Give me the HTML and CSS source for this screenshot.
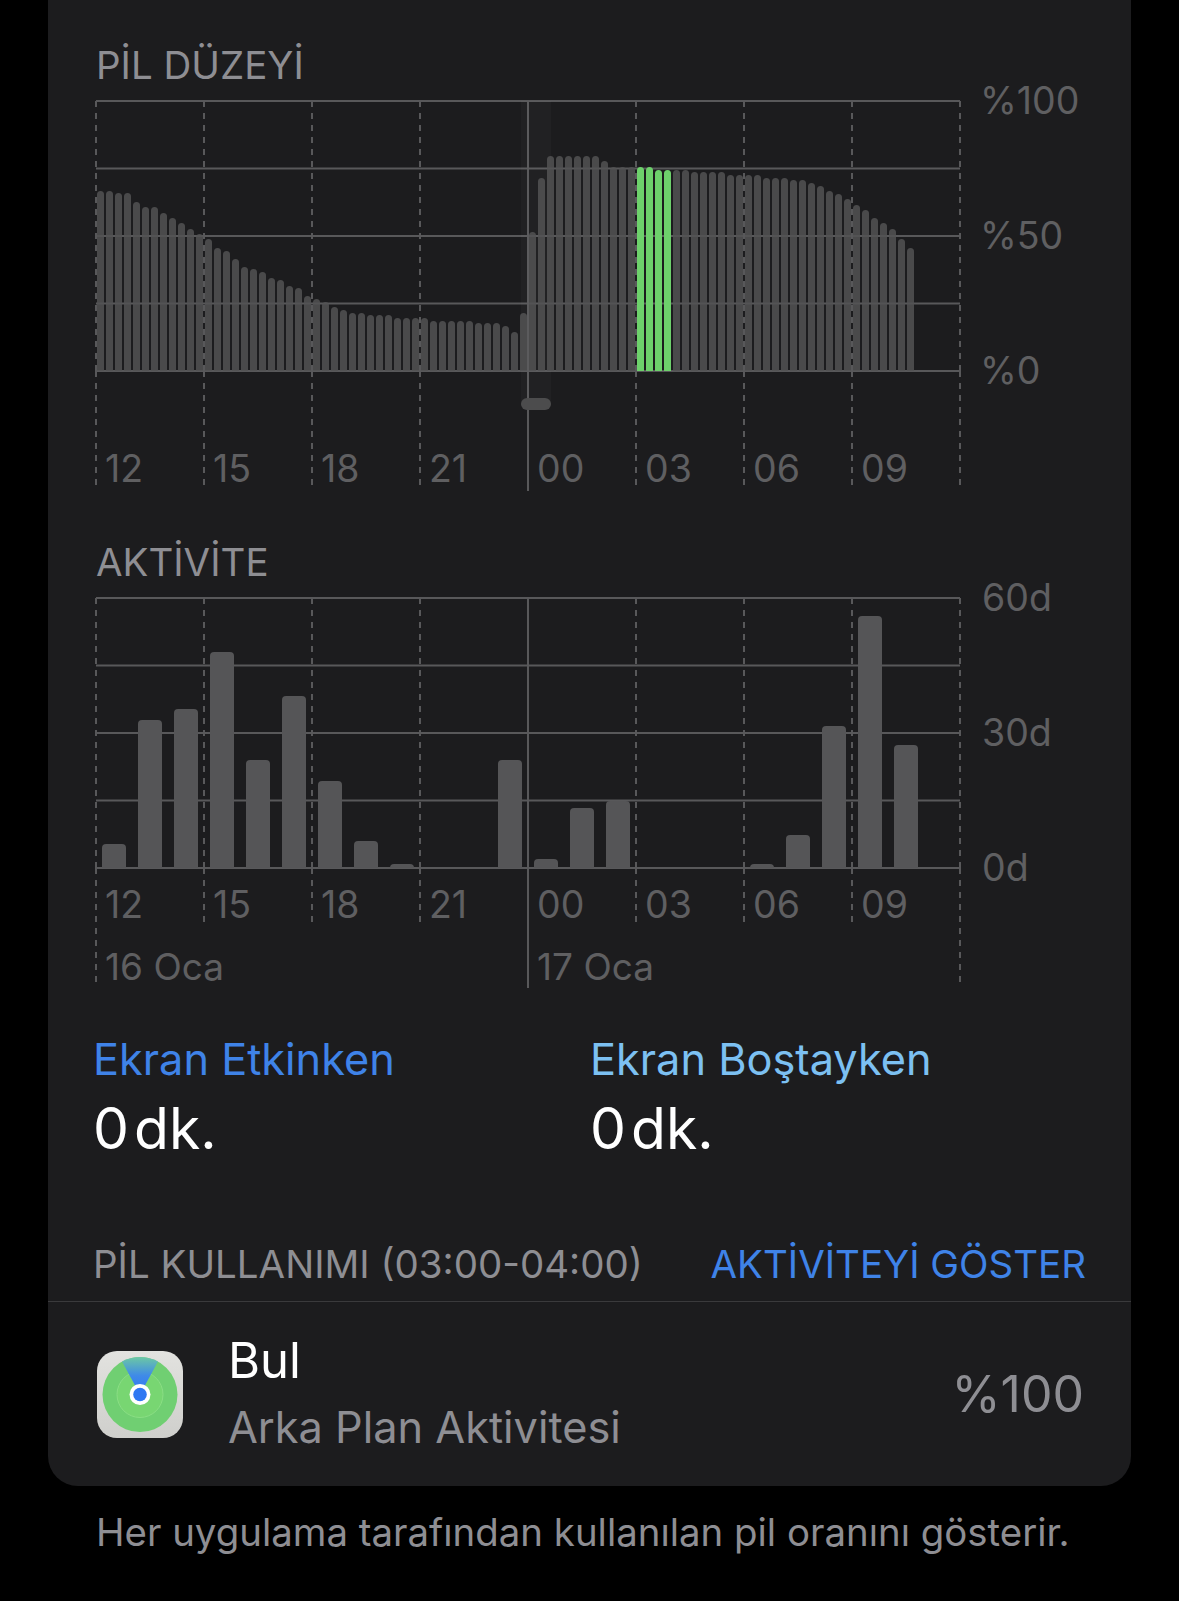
FILE: index.html
```html
<!DOCTYPE html>
<html lang="tr">
<head>
    <meta charset="utf-8">
    <title>Pil</title>
    <link rel="stylesheet" href="styles.css">
</head>
<body>
    <div class="card">
        <div class="charts">
            <h2 class="chart-title">PİL DÜZEYİ</h2>
            <div class="chart-body">
                <div class="plot plot-battery">
                    <svg class="grid" width="866" height="392" viewBox="-1 -1 866 392">
                        <path class="grid-solid" d="M0 0H864M0 67.5H864M0 135H864M0 202.5H864M0 270H864M432 0V390"/>
                        <path class="grid-solid" d="M0 270V276M108 270V276M216 270V276M324 270V276M540 270V276M648 270V276M756 270V276M864 270V276"/>
                        <path class="grid-dash" d="M0 0V270M108 0V270M216 0V270M324 0V270M540 0V270M648 0V270M756 0V270M864 0V270"/>
                        <path class="grid-dash" d="M0 282V384M108 282V384M216 282V384M324 282V384M540 282V384M648 282V384M756 282V384M864 282V384"/>
                    </svg>
                    <div class="slider-band"></div>
                    <div class="slider-handle"></div>
                    <div class="level-bars">
                        <i style="height:180px"></i><i style="height:180px"></i><i style="height:178px"></i><i style="height:178px"></i><i style="height:169px"></i><i style="height:164px"></i><i style="height:164px"></i><i style="height:158px"></i><i style="height:153px"></i><i style="height:148px"></i><i style="height:142px"></i><i style="height:137px"></i>
                        <i style="height:132px"></i><i style="height:123px"></i><i style="height:120px"></i><i style="height:112px"></i><i style="height:104px"></i><i style="height:102px"></i><i style="height:99px"></i><i style="height:93px"></i><i style="height:91px"></i><i style="height:85px"></i><i style="height:83px"></i><i style="height:75px"></i>
                        <i style="height:72px"></i><i style="height:69px"></i><i style="height:64px"></i><i style="height:61px"></i><i style="height:58px"></i><i style="height:58px"></i><i style="height:56px"></i><i style="height:56px"></i><i style="height:56px"></i><i style="height:53px"></i><i style="height:53px"></i><i style="height:53px"></i>
                        <i style="height:53px"></i><i style="height:50px"></i><i style="height:50px"></i><i style="height:50px"></i><i style="height:50px"></i><i style="height:50px"></i><i style="height:48px"></i><i style="height:48px"></i><i style="height:48px"></i><i style="height:45px"></i><i style="height:39px"></i><i style="height:58px"></i>
                        <i style="height:139px"></i><i style="height:193px"></i><i style="height:215px"></i><i style="height:215px"></i><i style="height:215px"></i><i style="height:215px"></i><i style="height:215px"></i><i style="height:215px"></i><i style="height:210px"></i><i style="height:204px"></i><i style="height:204px"></i><i style="height:204px"></i>
                        <i class="on" style="height:204px"></i><i class="on" style="height:204px"></i><i class="on" style="height:201px"></i><i class="on" style="height:201px"></i><i style="height:201px"></i><i style="height:201px"></i><i style="height:199px"></i><i style="height:199px"></i><i style="height:199px"></i><i style="height:199px"></i><i style="height:196px"></i><i style="height:196px"></i>
                        <i style="height:196px"></i><i style="height:196px"></i><i style="height:193px"></i><i style="height:193px"></i><i style="height:193px"></i><i style="height:191px"></i><i style="height:191px"></i><i style="height:188px"></i><i style="height:185px"></i><i style="height:180px"></i><i style="height:177px"></i><i style="height:172px"></i>
                        <i style="height:166px"></i><i style="height:161px"></i><i style="height:153px"></i><i style="height:148px"></i><i style="height:142px"></i><i style="height:132px"></i><i style="height:123px"></i>
                    </div>
                </div>
                <div class="axis axis-percent">
                    <span>%100</span>
                    <span>%50</span>
                    <span>%0</span>
                </div>
                <div class="hours">
                    <span>12</span><span>15</span><span>18</span><span>21</span><span>00</span><span>03</span><span>06</span><span>09</span>
                </div>
            </div>

            <h2 class="chart-title chart-title-second">AKTİVİTE</h2>
            <div class="chart-body">
                <div class="plot plot-activity">
                    <svg class="grid" width="866" height="392" viewBox="-1 -1 866 392">
                        <path class="grid-solid" d="M0 0H864M0 67.5H864M0 135H864M0 202.5H864M0 270H864M432 0V390"/>
                        <path class="grid-solid" d="M0 270V276M108 270V276M216 270V276M324 270V276M540 270V276M648 270V276M756 270V276M864 270V276"/>
                        <path class="grid-dash" d="M0 0V270M108 0V270M216 0V270M324 0V270M540 0V270M648 0V270M756 0V270M864 0V270"/>
                        <path class="grid-dash" d="M0 282V384M864 282V384M108 282V324M216 282V324M324 282V324M540 282V324M648 282V324M756 282V324"/>
                    </svg>
                    <div class="activity-bars">
                        <i style="height:24px"></i><i style="height:148px"></i><i style="height:159px"></i><i style="height:216px"></i><i style="height:108px"></i><i style="height:172px"></i><i style="height:87px"></i><i style="height:27px"></i>
                        <i style="height:4px"></i><i></i><i></i><i style="height:108px"></i><i style="height:9px"></i><i style="height:60px"></i><i style="height:67px"></i><i></i>
                        <i></i><i></i><i style="height:4px"></i><i style="height:33px"></i><i style="height:142px"></i><i style="height:252px"></i><i style="height:123px"></i><i></i>
                    </div>
                </div>
                <div class="axis">
                    <span>60d</span>
                    <span>30d</span>
                    <span>0d</span>
                </div>
                <div class="hours">
                    <span>12</span><span>15</span><span>18</span><span>21</span><span>00</span><span>03</span><span>06</span><span>09</span>
                </div>
                <div class="dates">
                    <span>16 Oca</span>
                    <span>17 Oca</span>
                </div>
            </div>
        </div>

        <div class="legend">
            <div class="legend-item">
                <div class="legend-label label-active">Ekran Etkinken</div>
                <div class="legend-value">0 dk.</div>
            </div>
            <div class="legend-item">
                <div class="legend-label label-idle">Ekran Boştayken</div>
                <div class="legend-value">0 dk.</div>
            </div>
        </div>

        <div class="usage-head">
            <span>PİL KULLANIMI (03:00-04:00)</span>
            <a class="show-activity">AKTİVİTEYİ GÖSTER</a>
        </div>

        <div class="app-row">
            <svg class="app-icon" width="86" height="87" viewBox="0 0 86 87">
                <defs>
                    <linearGradient id="iconBg" x1="0" y1="0" x2="0" y2="1">
                        <stop offset="0" stop-color="#e2e2df"/>
                        <stop offset="1" stop-color="#cfcfcc"/>
                    </linearGradient>
                    <linearGradient id="cone" x1="0" y1="1" x2="0" y2="0">
                        <stop offset="0" stop-color="#2f78f4"/>
                        <stop offset="0.5" stop-color="#3f8ae8"/>
                        <stop offset="1" stop-color="#6cc8a4"/>
                    </linearGradient>
                </defs>
                <rect width="86" height="87" rx="20" fill="url(#iconBg)"/>
                <circle cx="43" cy="43.5" r="37.5" fill="#70cf72"/>
                <circle cx="43" cy="43.5" r="23" fill="#78d672" stroke="#8ade84" stroke-width="1"/>
                <path d="M43 43.5L25 10.6A37.5 37.5 0 0 1 61 10.6Z" fill="url(#cone)"/>
                <circle cx="43" cy="43.5" r="10.5" fill="#fff"/>
                <circle cx="43" cy="43.5" r="6.8" fill="#2f78f2"/>
            </svg>
            <div class="app-text">
                <div class="app-name">Bul</div>
                <div class="app-sub">Arka Plan Aktivitesi</div>
            </div>
            <div class="app-percent">%100</div>
        </div>
    </div>

    <p class="footnote">Her uygulama tarafından kullanılan pil oranını gösterir.</p>
</body>
</html>
```

FILE: styles.css
```css
body {
    margin: 0;
    background-color: #000;
    font-family: Inter, "Liberation Sans", sans-serif;
    color: #8e8e93;
}

.card {
    margin: 0 48px;
    background-color: #1c1c1e;
    border-radius: 0 0 30px 30px;
}

.charts {
    padding: 43px 0 0 48px;
}

.chart-title {
    margin: 0 0 14px;
    font-size: 38.5px;
    font-weight: 400;
    line-height: 44px;
    color: #8e8e93;
}

.chart-title-second {
    margin-top: 51px;
}

.chart-body {
    display: grid;
    grid-template-columns: 864px auto;
    column-gap: 22px;
}

.plot {
    position: relative;
    height: 270px;
}

.plot-battery {
    margin-bottom: 78px;
}

.plot-activity {
    margin-bottom: 17px;
}

.grid {
    position: absolute;
    left: -1px;
    top: -1px;
    overflow: visible;
}

.grid-solid {
    fill: none;
    stroke: #58585a;
    stroke-width: 2;
}

.grid-dash {
    fill: none;
    stroke: #58585a;
    stroke-width: 2;
    stroke-dasharray: 6 6;
}

.slider-band {
    position: absolute;
    left: 425px;
    top: 0;
    width: 30px;
    height: 305px;
    background-color: rgba(255, 255, 255, 0.025);
}

.slider-handle {
    position: absolute;
    left: 425px;
    top: 297px;
    width: 30px;
    height: 12px;
    border-radius: 6px;
    background-color: #4c4c4d;
}

.level-bars {
    position: absolute;
    left: 0;
    right: 0;
    bottom: 0;
    display: flex;
    align-items: flex-end;
}

.level-bars i {
    flex: none;
    width: 7px;
    margin: 0 1px;
    border-radius: 3.5px 3.5px 0 0;
    background-color: rgba(82, 82, 83, 0.85);
}

.level-bars i.on {
    background-color: #6dd16b;
}

.activity-bars {
    position: absolute;
    left: 0;
    right: 0;
    bottom: 0;
    display: flex;
    align-items: flex-end;
}

.activity-bars i {
    flex: none;
    width: 24px;
    margin: 0 6px;
    border-radius: 4px 4px 0 0;
    background-color: #555557;
}

.axis {
    display: flex;
    flex-direction: column;
    justify-content: space-between;
    height: 270px;
    font-size: 37.5px;
    color: #5f5f61;
}

.axis-percent {
    margin-left: -2px;
}

.axis span {
    height: 0;
    line-height: 0;
}

.hours {
    display: grid;
    grid-template-columns: repeat(8, 108px);
    font-size: 37.5px;
    line-height: 40px;
    color: #5f5f61;
}

.hours span {
    padding-left: 9px;
}

.dates {
    grid-column: 1;
    display: grid;
    grid-template-columns: 432px 432px;
    margin-top: 22px;
    font-size: 37px;
    line-height: 40px;
    color: #5f5f61;
}

.dates span {
    padding-left: 9px;
}

.legend {
    display: grid;
    grid-template-columns: 497px auto;
    margin-top: 47px;
    padding-left: 45px;
}

.legend-label {
    font-size: 43.3px;
    line-height: 50px;
}

.label-active {
    color: #3f83e8;
}

.label-idle {
    color: #7cc0f2;
}

.legend-value {
    margin-top: 10px;
    font-size: 57px;
    line-height: 70px;
    color: #fff;
    word-spacing: -11px;
}

.usage-head {
    display: flex;
    justify-content: space-between;
    margin-top: 78px;
    padding: 0 45px 15px;
    border-bottom: 1.5px solid #3a3a3c;
    font-size: 38.5px;
    line-height: 44px;
}

.show-activity {
    color: #3f83e8;
}

.app-row {
    display: flex;
    align-items: center;
    height: 184px;
    padding: 0 47px 0 49px;
}

.app-icon {
    flex: none;
    margin-right: 45px;
}

.app-text {
    flex: 1;
}

.app-name {
    font-size: 49px;
    line-height: 66px;
    color: #fff;
}

.app-sub {
    font-size: 43.3px;
    line-height: 66px;
}

.app-percent {
    font-size: 50px;
}

.footnote {
    margin: 21px 0 0;
    padding-left: 96px;
    font-size: 38.4px;
    line-height: 50px;
}
```
